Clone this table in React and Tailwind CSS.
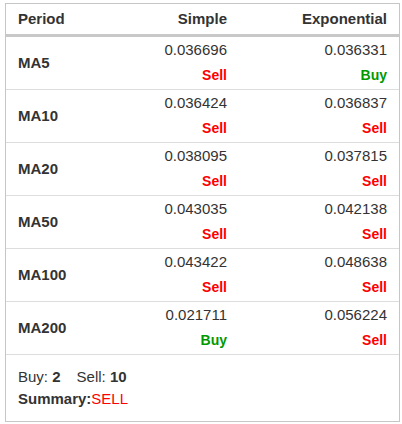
import React from "react";

const rows = [
  ["MA5", "0.036696", "Sell", "0.036331", "Buy"],
  ["MA10", "0.036424", "Sell", "0.036837", "Sell"],
  ["MA20", "0.038095", "Sell", "0.037815", "Sell"],
  ["MA50", "0.043035", "Sell", "0.042138", "Sell"],
  ["MA100", "0.043422", "Sell", "0.048638", "Sell"],
  ["MA200", "0.021711", "Buy", "0.056224", "Sell"],
];

function Signal({ s }) {
  return (
    <div
      className={
        "mt-[5px] text-[14px] leading-5 font-bold " +
        (s === "Buy" ? "text-[#009900]" : "text-[#ff0000]")
      }
    >
      {s}
    </div>
  );
}

export default function App() {
  return (
    <div
      className="ml-[5px] mt-[3px] w-[395px] border border-[#c6c6c6] bg-white text-[#333333] text-[15px]"
      style={{ fontFamily: '"Liberation Sans", Arial, sans-serif' }}
    >
      <div className="grid grid-cols-[1fr_160px_160px] h-[33px] items-center border-b-[3px] border-[#c8c8c8] font-bold">
        <div className="px-3">Period</div>
        <div className="px-3 text-right">Simple</div>
        <div className="px-3 text-right">Exponential</div>
      </div>
      {rows.map((r) => (
        <div
          key={r[0]}
          className="grid grid-cols-[1fr_160px_160px] h-[53px] border-b border-[#dddddd]"
        >
          <div className="px-3 flex items-center font-bold">{r[0]}</div>
          <div className="px-3 pt-[3px] text-right">
            <div className="leading-5">{r[1]}</div>
            <Signal s={r[2]} />
          </div>
          <div className="px-3 pt-[3px] text-right">
            <div className="leading-5">{r[3]}</div>
            <Signal s={r[4]} />
          </div>
        </div>
      ))}
      <div className="px-3 pt-3 pb-3">
        <div className="leading-5">
          Buy: <b>2</b>
          <span className="ml-4">
            Sell: <b>10</b>
          </span>
        </div>
        <div className="leading-5 mt-[2px]">
          <b>Summary:</b>
          <span className="text-[#ff0000]">SELL</span>
        </div>
      </div>
    </div>
  );
}
